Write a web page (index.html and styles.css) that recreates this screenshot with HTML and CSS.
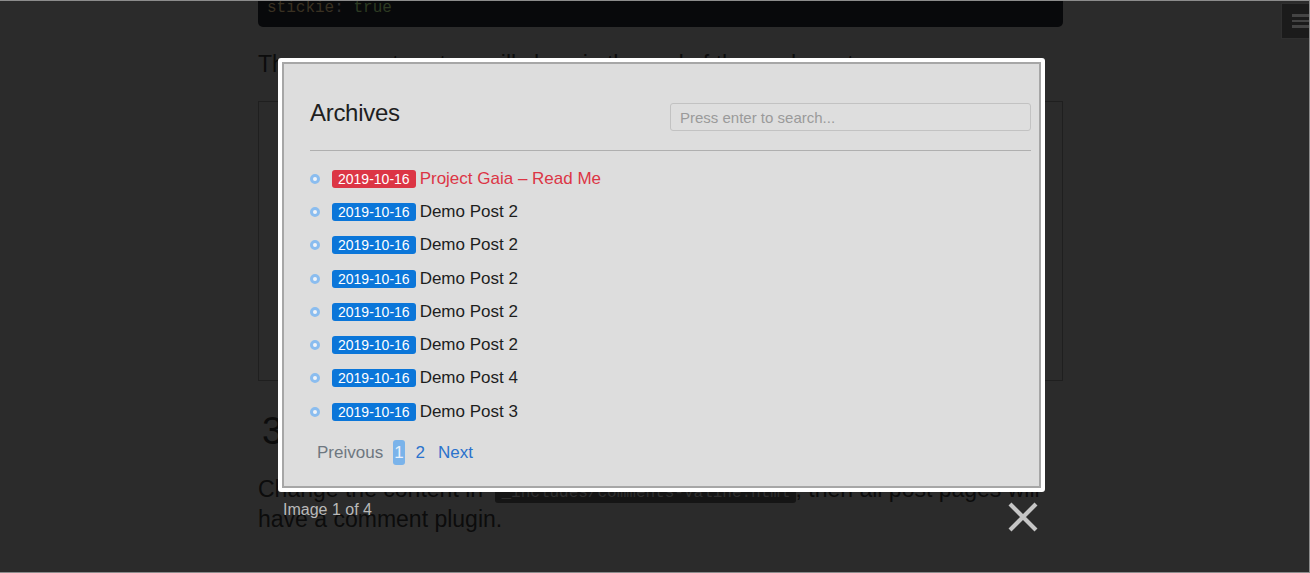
FILE: index.html
```html
<!DOCTYPE html>
<html lang="en">
<head>
<meta charset="utf-8">
<title>Archives</title>
<link rel="stylesheet" href="styles.css">
</head>
<body>
<div class="page">
  <pre class="code"><span class="k">stickie</span><span class="p">:</span> <span class="v">true</span></pre>
  <p class="para">The comment system will show in the end of the each post page.</p>
  <div class="embed"></div>
  <h3 class="step">3</h3>
  <p class="para">Change the content in <code class="inline">_includes/comments-valine.html</code>, then all post pages will have a comment plugin.</p>
</div>

<div class="toggle"><span></span><span></span><span></span></div>

<div class="lightbox">
  <div class="frame">
    <div class="shot">
      <div class="archive">
        <div class="head">
          <h1 class="title">Archives</h1>
          <input class="search" type="text" placeholder="Press enter to search...">
        </div>
        <hr class="rule">
        <ul class="posts">
          <li class="post"><i class="dot"></i><span class="badge red">2019-10-16</span><span class="name red-text">Project Gaia – Read Me</span></li>
          <li class="post"><i class="dot"></i><span class="badge">2019-10-16</span><span class="name">Demo Post 2</span></li>
          <li class="post"><i class="dot"></i><span class="badge">2019-10-16</span><span class="name">Demo Post 2</span></li>
          <li class="post"><i class="dot"></i><span class="badge">2019-10-16</span><span class="name">Demo Post 2</span></li>
          <li class="post"><i class="dot"></i><span class="badge">2019-10-16</span><span class="name">Demo Post 2</span></li>
          <li class="post"><i class="dot"></i><span class="badge">2019-10-16</span><span class="name">Demo Post 2</span></li>
          <li class="post"><i class="dot"></i><span class="badge">2019-10-16</span><span class="name">Demo Post 4</span></li>
          <li class="post"><i class="dot"></i><span class="badge">2019-10-16</span><span class="name">Demo Post 3</span></li>
        </ul>
        <div class="pager">
          <span class="prev">Preivous</span>
          <span class="num active">1</span>
          <span class="num second">2</span>
          <span class="num next">Next</span>
        </div>
      </div>
    </div>
  </div>
  <div class="data">
    <span class="caption">Image 1 of 4</span>
    <svg class="close" width="30" height="30" viewBox="0 0 30 30" aria-label="Close">
      <path d="M2 2 L28 28 M28 2 L2 28" stroke="#c6c6c6" stroke-width="4.2" fill="none"/>
    </svg>
  </div>
</div>

<div class="edge"></div>
</body>
</html>
```

FILE: styles.css
```css
html, body {
  margin: 0;
  padding: 0;
  height: 573px;
  overflow: hidden;
  background: #2b2b2b;
  font-family: "Liberation Sans", Arial, sans-serif;
}

.page {
  width: 805px;
  margin-left: 258px;
  color: #0c0c0c;
}

.code {
  margin: -6px 0 0;
  padding: 4px 9px 9px;
  background: #08090b;
  border-radius: 0 0 5px 5px;
  font-family: "Liberation Mono", monospace;
  font-size: 16px;
  line-height: 20px;
}
.code .k { color: #3a3122; }
.code .p { color: #2f2f2f; }
.code .v { color: #2d3a22; }

.para {
  margin: 22px 0 0;
  font-size: 23px;
  line-height: 30px;
}

.embed {
  margin-top: 22px;
  height: 278px;
  border: 1px solid #1f1f1f;
}

.step {
  margin: 28px 0 0 4px;
  font-size: 38px;
  font-weight: normal;
  line-height: 1.2;
}

.step + .para { margin-top: 19px; }

.inline {
  display: inline-block;
  background: #151515;
  color: #2e2e2e;
  font-family: "Liberation Mono", monospace;
  font-size: 16px;
  line-height: 20px;
  padding: 0 6px;
  border-radius: 3px;
  margin-left: 6px;
}

.toggle {
  position: fixed;
  top: 3px;
  right: 0;
  width: 29px;
  height: 36px;
  background: #1b1b1b;
  border: 1px solid #2f2f2f;
  border-right: none;
  display: flex;
  flex-direction: column;
  justify-content: center;
  gap: 3px;
  padding-left: 10px;
  box-sizing: border-box;
}
.toggle span {
  display: block;
  height: 2.5px;
  background: #444;
}

.lightbox {
  position: absolute;
  top: 58px;
  left: 278px;
  width: 767px;
}

.frame {
  background: #fff;
  padding: 4px;
  border-radius: 3px;
}

.shot {
  height: 426px;
  box-sizing: border-box;
  border: 2px solid #a6a6a6;
  background: #dddddd;
}

.archive {
  padding: 39px 8px 0 26px;
}

.head {
  display: flex;
  justify-content: space-between;
  align-items: center;
  height: 28px;
}

.title {
  margin: 0 0 8px;
  font-size: 24px;
  font-weight: normal;
  color: #1f1f1f;
  letter-spacing: -0.3px;
}

.search {
  width: 361px;
  height: 28px;
  box-sizing: border-box;
  border: 1px solid #c2c2c2;
  border-radius: 3px;
  background: #dedede;
  padding: 0 9px;
  font-family: "Liberation Sans", Arial, sans-serif;
  font-size: 15px;
  outline: none;
}
.search::placeholder { color: #9a9a9a; }

.rule {
  margin: 19px 0 0;
  border: none;
  height: 1px;
  background: #afafaf;
}

.posts {
  list-style: none;
  margin: 11px 0 0;
  padding: 0;
}

.post {
  display: flex;
  align-items: center;
  height: 33.3px;
}

.dot {
  width: 10px;
  height: 10px;
  box-sizing: border-box;
  border: 3px solid #8bbdef;
  border-radius: 50%;
  background: #f2f4f7;
  margin-right: 12px;
}

.badge {
  display: inline-block;
  height: 18px;
  line-height: 18px;
  padding: 0 6px;
  border-radius: 3px;
  background: #0b76d9;
  color: #fff;
  font-size: 14px;
  margin-right: 4px;
}
.badge.red { background: #dc3545; }

.name {
  font-size: 17px;
  color: #1e1e1e;
}
.red-text { color: #dc3545; }

.pager {
  display: flex;
  align-items: center;
  gap: 10px;
  height: 25px;
  margin-top: 12px;
  padding-left: 7px;
  font-size: 17px;
}
.prev { color: #6e7780; }
.num { color: #2a72cc; }
.num.active {
  background: #7ab3ea;
  color: #e9f1fb;
  height: 25px;
  line-height: 25px;
  padding: 0 1px;
  border-radius: 3px;
}
.num.second { margin-left: 1px; }
.num.next { margin-left: 3px; }

.data {
  display: flex;
  justify-content: space-between;
  align-items: flex-start;
  margin-top: 10px;
  padding: 0 7px 0 5px;
}

.caption {
  color: #b9b9b9;
  font-size: 16px;
  line-height: 16px;
}

.edge {
  position: fixed;
  inset: 0;
  border-top: 1px solid #8c8c8c;
  border-right: 1px solid #8c8c8c;
  border-bottom: 1px solid #8c8c8c;
  pointer-events: none;
}
```
